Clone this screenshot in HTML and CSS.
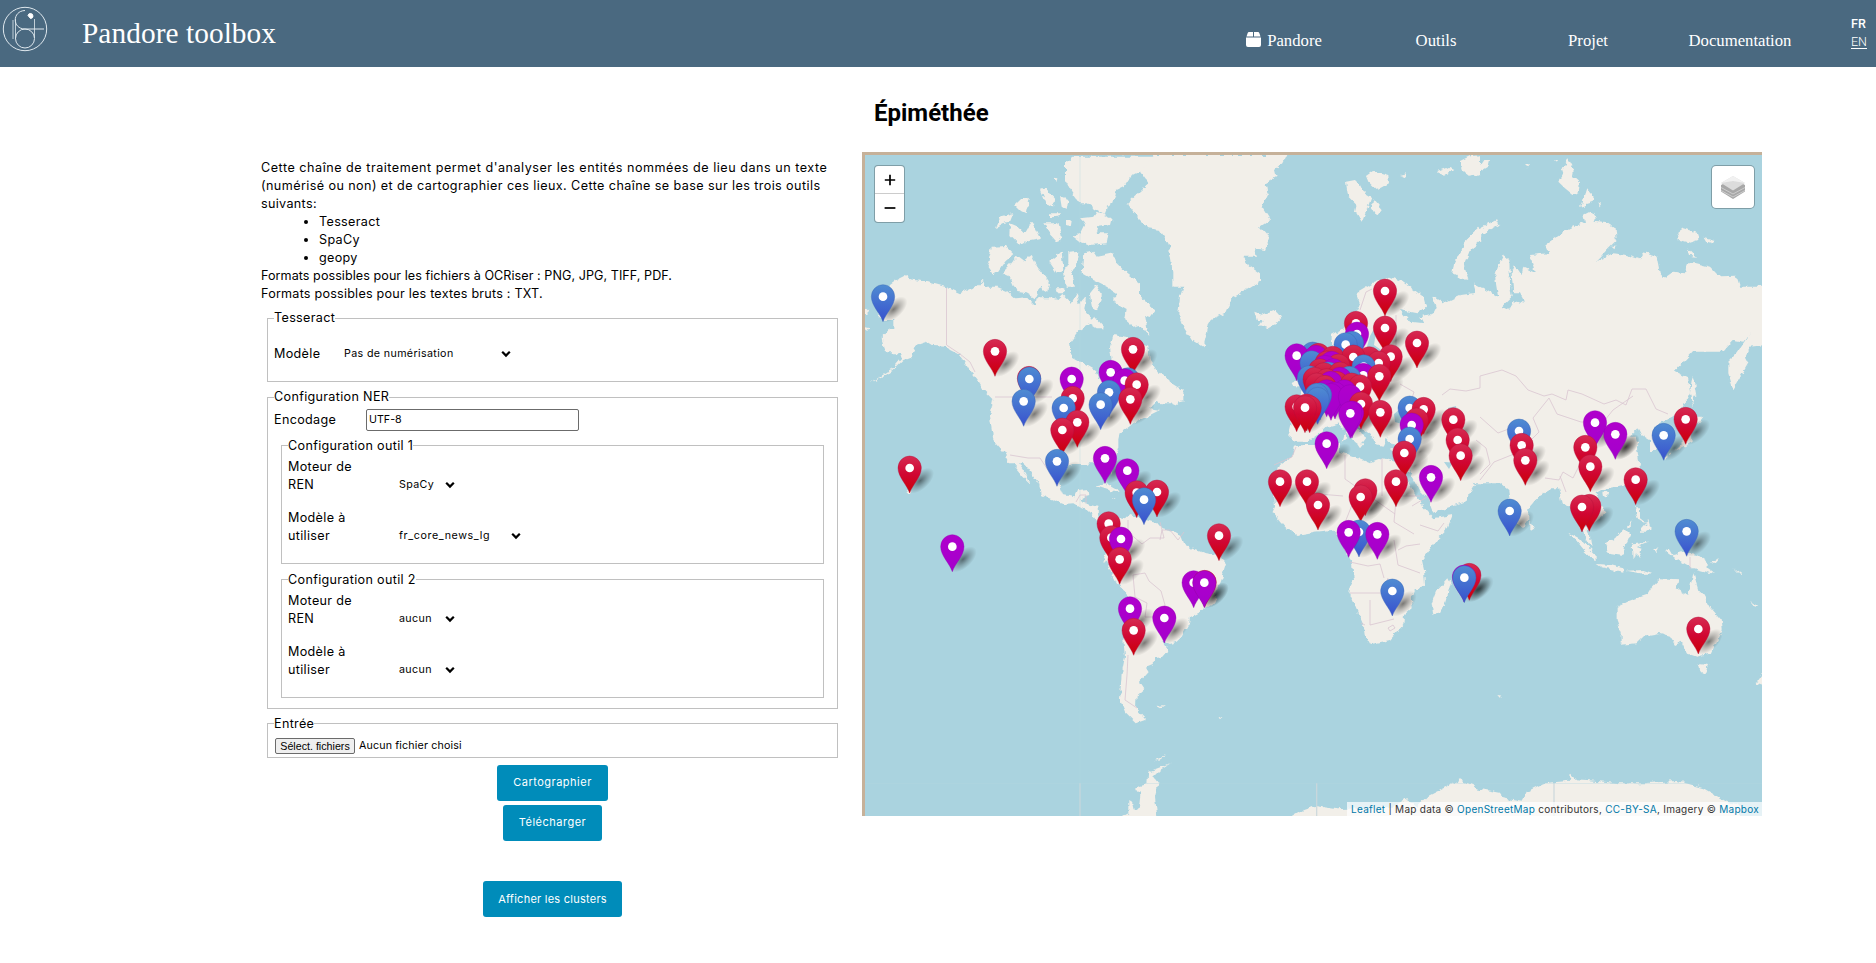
FILE: index.html
```html
<!DOCTYPE html>
<html lang="fr">
<head>
<meta charset="utf-8">
<title>Pandore toolbox</title>
<link rel="stylesheet" href="styles.css">
</head>
<body>
<header class="topbar">
  <svg class="logo" width="46" height="46" viewBox="0 0 46 46" fill="none" stroke="#dfe8ee" stroke-width="1">
    <circle cx="23" cy="23" r="21.7"/>
    <circle cx="23" cy="32.500" r="9.500"/>
    <path d="M23 4.500C10 5 10 23 23 23H42" /><path d="M13.500 13V33M11 14V33M32.500 13V32" stroke-opacity=".8"/>
    <path d="M26 9.500a2.500 2.500 0 1 1 2.500 3z" fill="#fff" stroke="#fff"/>
  </svg>
  <div class="brand">Pandore toolbox</div>
  <nav class="menu">
    <a class="menu-item"><svg class="box" width="15" height="15" viewBox="0 0 15 15" fill="#fff"><path d="M3 0h4v4.500H.5L1.700 1Q2 0 3 0zM8 0h4q1 0 1.300 1l1.200 3.500H8zM0 5.500h15V13q0 2-2 2H2q-2 0-2-2z"/></svg>Pandore</a>
    <a class="menu-item">Outils</a>
    <a class="menu-item">Projet</a>
    <a class="menu-item">Documentation</a>
  </nav>
  <div class="langs"><span class="lang-on">FR</span><span class="lang">EN</span></div>
</header>
<main class="page">
  <section class="side">
    <p class="intro"><span class="l1">Cette chaîne de traitement permet d'analyser les entités nommées de lieu dans un texte</span><br><span class="l2">(numérisé ou non) et de cartographier ces lieux. Cette chaîne se base sur les trois outils</span><br>suivants:</p>
    <ul class="tools"><li>Tesseract</li><li>SpaCy</li><li>geopy</li></ul>
    <p class="intro"><span class="l3">Formats possibles pour les fichiers à OCRiser : PNG, JPG, TIFF, PDF.</span><br><span class="l4">Formats possibles pour les textes bruts : TXT.</span></p>
    <fieldset class="group group-ocr">
      <legend>Tesseract</legend>
      <div class="row"><span class="row-label">Modèle</span><span class="select select-wide">Pas de numérisation<svg class="chev" width="10" height="8" viewBox="0 0 10 8"><path d="M1.200 1.700L5 5.600 8.800 1.700"/></svg></span></div>
    </fieldset>
    <fieldset class="group group-ner">
      <legend>Configuration NER</legend>
      <div class="enc"><span class="enc-label">Encodage</span><span class="input">UTF-8</span></div>
      <fieldset class="tool">
        <legend>Configuration outil 1</legend>
        <div class="opt"><span class="opt-label">Moteur de<br>REN</span><span class="select select-s">SpaCy<svg class="chev" width="10" height="8" viewBox="0 0 10 8"><path d="M1.200 1.700L5 5.600 8.800 1.700"/></svg></span></div>
        <div class="opt"><span class="opt-label">Modèle à<br>utiliser</span><span class="select select-m">fr_core_news_lg<svg class="chev" width="10" height="8" viewBox="0 0 10 8"><path d="M1.200 1.700L5 5.600 8.800 1.700"/></svg></span></div>
      </fieldset>
      <fieldset class="tool">
        <legend>Configuration outil 2</legend>
        <div class="opt"><span class="opt-label">Moteur de<br>REN</span><span class="select select-s">aucun<svg class="chev" width="10" height="8" viewBox="0 0 10 8"><path d="M1.200 1.700L5 5.600 8.800 1.700"/></svg></span></div>
        <div class="opt"><span class="opt-label">Modèle à<br>utiliser</span><span class="select select-s">aucun<svg class="chev" width="10" height="8" viewBox="0 0 10 8"><path d="M1.200 1.700L5 5.600 8.800 1.700"/></svg></span></div>
      </fieldset>
    </fieldset>
    <fieldset class="group group-in">
      <legend>Entrée</legend>
      <div class="file"><span class="file-btn">Sélect. fichiers</span><span class="file-txt">Aucun fichier choisi</span></div>
    </fieldset>
    <div class="actions">
      <span class="btn btn-carto">Cartographier</span>
      <span class="btn btn-dl">Télécharger</span>
      <span class="btn btn-cl">Afficher les clusters</span>
    </div>
  </section>
  <section class="main">
    <h1 class="title">Épiméthée</h1>
    <div class="map">
      <svg class="world" width="897" height="661" viewBox="865 155 897 661">
        <defs>
          <linearGradient id="gr" x1="0" y1="0" x2="0" y2="1"><stop offset="0" stop-color="#d62b52"/><stop offset=".5" stop-color="#d00632"/><stop offset="1" stop-color="#cb0005"/></linearGradient>
          <linearGradient id="gb" x1="0" y1="0" x2="0" y2="1"><stop offset="0" stop-color="#4f8cd2"/><stop offset="1" stop-color="#3850ce"/></linearGradient>
          <linearGradient id="gp" x1="0" y1="0" x2="0" y2="1"><stop offset="0" stop-color="#b000cc"/><stop offset="1" stop-color="#a400cc"/></linearGradient>
          <radialGradient id="gs"><stop offset="0" stop-color="#000" stop-opacity=".5"/><stop offset=".5" stop-color="#000" stop-opacity=".22"/><stop offset="1" stop-color="#000" stop-opacity="0"/></radialGradient>
          <filter id="coast" x="0" y="0" width="1" height="1"><feTurbulence type="fractalNoise" baseFrequency=".16" numOctaves="2" seed="4"/><feDisplacementMap in="SourceGraphic" scale="6" xChannelSelector="R" yChannelSelector="G"/></filter>
          <path id="pin" d="M0 75C-7 52-35 27-35 0A35 36 0 0 1 35 0C35 27 7 52 0 75z"/>
          <g id="sh"><ellipse cx="32" cy="38" rx="50" ry="26" transform="rotate(-42 32 38)" fill="url(#gs)"/></g>
          <use id="rx" href="#pin" fill="url(#gr)" stroke="#b3103a" stroke-opacity=".6" stroke-width="2"/>
          <use id="bx" href="#pin" fill="url(#gb)" stroke="#3a66b4" stroke-opacity=".6" stroke-width="2"/>
          <use id="px" href="#pin" fill="url(#gp)" stroke="#8f00b0" stroke-opacity=".6" stroke-width="2"/>
          <g id="r"><use href="#rx"/><circle r="13" fill="#fff"/></g>
          <g id="b"><use href="#bx"/><circle r="13" fill="#fff"/></g>
          <g id="p"><use href="#px"/><circle r="13" fill="#fff"/></g>
        </defs>
        <rect x="865" y="155" width="897" height="661" fill="#aad3df"/>
        <g fill="#f2efe9" filter="url(#coast)">
          <rect x="855" y="145" width="917" height="681" fill="none"/>
          <!-- North America and the Arctic islands -->
          <g transform="translate(850 80) scale(.33333)">
            <path d="M120 612L140 598 165 585 180 597 240 608 290 622 330 640 355 628 380 618 395 603 410 620 440 620 470 632 495 655 530 652 555 678 560 655 600 655 625 660 640 645 665 668 680 640 690 670 705 650 700 690 720 710 715 735 690 750 660 790 665 830 700 850 735 870 745 895 765 895 770 860 785 840 780 800 790 765 830 770 870 790 895 800 900 840 925 880 960 905 1000 930 1000 960 960 970 935 970 925 960 900 985 930 990 880 1015 850 1030 810 1060 800 1090 780 1150 480 1150 465 1120 430 1080 420 1010 430 960 400 930 385 905 365 880 345 845 330 825 300 810 290 800 250 798 230 785 200 795 185 830 160 840 130 870 100 890 60 910 90 890 130 865 155 835 150 820 110 820 100 800 95 770 110 755 130 745 130 720 100 720 80 700 100 660z"/>
            <path d="M425 500L465 498 490 522 465 545 445 575 430 585 412 560zM500 530L520 545 545 525 565 560 600 610 595 635 570 620 555 655 530 640 500 635 480 590 455 580 480 555zM670 230L910 230 880 270 840 290 820 320 800 330 790 365 770 380 765 405 740 390 710 370 690 370 665 335 645 300 645 250zM690 460L705 430 690 415 730 410 740 395 785 415 780 435 745 440 740 460 775 460 770 490 720 495 690 485 670 470zM700 520L730 515 740 530 790 520 800 550 830 580 870 610 870 650 915 690 900 710 885 705 895 765 870 735 850 740 825 720 830 690 795 670 800 640 770 620 730 600 695 580zM655 515L688 512 680 560 660 575 675 620 650 620 645 570 655 550zM598 545L635 515 640 570 620 578zM480 430L505 440 525 460 545 425 570 475 540 480 510 497 478 465zM435 445L450 410 490 400 480 425 460 430zM580 430L625 430 635 470 625 488 600 460zM495 375L520 350 540 355 530 400 510 390zM572 330L585 325 615 360 612 382 590 375zM630 350L655 360 650 390 635 380zM645 420L668 420 665 438 645 435zM600 400L630 400 625 410 600 412zM612 290L625 292 622 308zM720 640L740 615 755 640 755 660 740 690 725 680zM710 725L735 710 765 745 740 745zM790 655L808 655 805 672 790 670zM45 680L58 692 45 705zM45 742L65 746 45 750zM620 625L640 625 640 640 625 640z"/>
          </g>
          <!-- Greenland, Svalbard, Europe -->
          <g transform="translate(1160 140) scale(.33333)">
            <path d="M-20 45L382 45 370 70 345 90 350 110 320 130 325 160 305 200 330 240 300 260 330 295 315 330 285 325 290 350 250 350 265 375 300 400 300 425 260 450 215 475 195 520 160 535 145 560 130 622 95 600 70 560 55 520 60 470 70 440 40 440 40 400 25 310 0 270 -35 265 -75 225 -100 190 -35 130 -60 95z"/>
            <path d="M-40 720L0 695 30 720 20 750 45 765 52 798 20 785 0 790 -40 770zM283 515L310 525 350 510 367 530 350 550 325 565 300 555 310 540 290 540zM558 125L585 120 600 135 610 155 635 170 620 210 605 248 585 215 590 195 565 170zM618 108L640 92 685 105 687 130 650 150 625 125zM640 178L665 208 650 225 635 200zM720 105L740 100 735 112zM835 90L860 80 880 90 850 110zM900 70L925 50 960 45 960 105 930 110 905 90zM960 260L920 300 885 370 880 400 920 420 910 380 930 330 965 300z"/>
            <path d="M515 600L515 585 560 560 585 520 600 490 590 460 640 430 690 410 730 425 790 470 798 500 770 520 720 510 750 545 790 550 780 530 820 520 830 500 820 470 850 490 900 465 970 455 970 1030 880 1020 850 960 780 960 740 1000 720 960 740 930 700 915 680 890 670 920 650 915 640 890 600 860 575 830 600 870 615 895 600 915 570 890 540 850 500 860 480 880 440 905 405 905 385 890 395 850 385 790 420 770 430 740 400 738 395 730 420 720 430 690 480 680 520 640z"/>
            <path d="M540 840L552 870 540 860zM555 880L562 895 548 905zM590 910L612 910 600 925zM690 925L720 925 700 932z"/>
          </g>
          <!-- Asia -->
          <g transform="translate(1460 140) scale(.33333)">
            <path d="M-10 470L50 465 40 430 60 440 115 472 105 410 120 365 130 345 148 360 150 430 155 470 125 500 150 512 160 480 195 488 180 460 160 460 155 400 165 375 185 405 190 380 225 395 210 345 265 340 255 315 290 290 330 265 375 245 370 225 395 212 410 235 400 245 445 250 467 265 470 300 445 325 410 362 460 340 500 345 540 358 550 340 590 350 600 400 612 415 640 395 675 400 680 370 710 370 750 380 780 412 830 410 840 440 915 440 915 615 870 620 855 650 865 670 820 748 805 700 805 665 830 640 870 580 850 605 820 600 790 635 700 635 645 695 685 715 690 760 665 810 640 830 600 850 580 870 600 910 595 930 570 930 570 900 545 885 535 865 510 890 500 905 540 905 525 935 540 975 525 1030 -10 1030z"/>
            <path d="M697 705L705 730 712 770 700 770 697 800 690 760zM690 830L730 830 715 850 690 860zM610 955L640 935 675 900 690 865 695 905 660 925 625 940 620 960zM110 238L60 265 20 300 0 340 -10 410 25 420 12 380 20 330 70 280 118 255zM325 58L342 90 338 110 360 130 355 160 340 165 315 145 295 125 310 100 305 85zM378 145L405 175 395 190 360 200zM655 275L670 265 715 280 718 300 690 308 660 300zM728 290L765 300 755 310 735 302zM683 325L708 350 690 348zM0 60L30 45 35 70 50 90 70 60 90 60 85 80 60 95 30 105 0 80zM285 60l12 0-4 7zM195 75l12 0-5 7zM415 190l10 5-6 4zM455 320l12 0-4 8z"/>
          </g>
          <!-- Mexico, Central and South America -->
          <g transform="translate(860 440) scale(.33333)">
            <path d="M405 -10L415 10 445 40 465 80 490 110 510 130 495 100 470 60 485 60 520 105 542 140 545 165 580 180 610 192 640 190 665 205 690 215 712 245 745 250 750 235 730 245 715 230 712 200 670 190 660 180 685 165 683 147 655 150 645 172 610 165 595 130 600 95 640 75 680 75 700 65 740 68 755 105 760 70 775 20 775 -10zM705 137L735 130 780 155 760 155zM755 172l12 4-8 2zM140 150l12 12-8 0z"/>
            <path d="M735 245L770 230 795 235 808 222 840 235 890 250 905 268 940 275 965 290 975 318 1030 338 1075 345 1098 370 1085 410 1070 450 1065 490 1035 508 990 530 988 550 965 590 950 605 930 612 905 600 925 632 910 650 880 655 878 672 858 680 867 695 840 725 853 745 830 765 828 800 835 815 858 840 830 850 795 815 780 780 785 700 795 650 790 600 805 540 810 490 800 460 770 430 745 380 732 355 745 310 730 275zM888 798L915 795 900 805zM1075 828L1090 836 1085 840zM932 970L900 990 880 1010 895 1030 885 1070 893 1140 770 1140 805 1120 805 1080 820 1090 825 1110 840 1100 845 1055 825 1050 840 1035 862 1030 865 995zM885 960l30-12-20 14z"/>
          </g>
          <!-- Africa, South Asia, Oceania, Antarctica -->
          <g transform="translate(1260 440) scale(.33333)">
            <path d="M130 15L105 20 95 50 60 75 40 130 45 200 38 215 75 260 110 285 165 275 215 270 230 285 250 290 255 330 275 365 282 420 265 450 290 510 315 570 320 605 335 612 390 600 430 555 432 525 455 505 452 465 495 435 492 390 485 360 530 300 560 270 578 225 520 235 490 200 440 120 420 70 370 55 330 70 285 50 240 35 240 5 200 15zM565 415L572 430 555 490 540 520 520 527 515 490 528 455z"/>
            <path d="M420 -10L440 60 450 95 480 150 500 170 518 218 560 205 610 190 645 135 610 115 580 115 560 70 590 100 640 110 700 110 720 130 745 150 752 200 770 250 790 265 805 240 805 205 840 165 875 145 895 145 905 190 930 200 940 230 960 250 975 290 995 322 990 290 975 260 970 230 1000 250 1040 220 1020 190 1010 160 1030 148 1090 135 1130 110 1137 60 1130 20 1125 -10zM808 240L820 265 808 272zM1030 155l15 0-5 15-8-4z"/>
            <path d="M925 275L960 295 1010 345 1010 368 970 330zM1010 372L1050 375 1090 385 1090 395 1025 382zM1100 392L1150 390 1180 400 1150 402zM1035 310L1065 295 1090 265 1110 285 1095 320 1090 345 1045 338zM1115 310L1165 305 1130 318 1148 325 1135 335 1145 358 1125 340 1118 360zM1125 205L1140 205 1140 235 1160 250 1135 240zM1140 268L1165 240 1172 265 1160 275 1140 275zM1100 262L1122 235 1108 262zM1210 325L1230 328 1240 345 1270 335 1310 345 1340 365 1340 385 1365 402 1300 385 1255 360 1240 350zM1350 365L1380 355 1365 372zM1180 330l15-12-8 25zM1420 385l25 18-5 2zM1470 482L1492 498 1485 500z"/>
            <path d="M1070 500L1100 485 1130 475 1160 465 1175 440 1200 415 1255 418 1250 445 1285 467 1300 400 1315 450 1330 465 1350 500 1385 540 1388 570 1355 640 1310 650 1280 640 1265 605 1245 615 1230 590 1200 582 1150 590 1130 610 1085 614 1085 580 1070 540zM1316 672L1345 675 1335 702 1322 695zM1490 728L1510 700 1510 735zM715 765l15 2-8 6z"/>
            <path d="M80 1140L130 1110 165 1098 230 1108 400 1100 440 1075 470 1100 500 1070 550 1045 600 1018 625 1030 650 1045 720 1058 730 1075 785 1085 800 1055 850 1030 930 1022 932 1003 945 1018 980 1020 1080 1030 1150 1030 1250 1023 1330 1045 1400 1085 1440 1095 1440 1140z"/>
          </g>
        </g>
        <!-- Inland seas -->
        <g fill="#aad3df">
          <path d="M1380 318L1384 317 1376 332 1374 345 1384 352 1372 354 1360 368 1352 368 1366 350 1370 336zM1394 414L1406 404 1422 416 1420 424 1402 424 1395 422zM1448 408L1456 406 1458 422 1456 432 1449 424zM1462 463L1453 462 1449 469 1444 462z"/>
        </g>
        <!-- Country borders and tile seams -->
        <g fill="none" stroke="#d9c5d0" stroke-width=".8">
          <path d="M946.500 288V345L960 354 970 362 975 372M995 397H1052M1010 455L1028 458 1040 458 1048 470M1076 502l4-7 6 0 0 8M1128 520l0 12 14 12 8-6 14 0-4-16M1160 540l2-10 8 0 8 10 6-8M1133 575l12-2 4 8 12 10 4 14-2 12-18 0 2-14-12-6zM1128 655l-1 20-2 25 12 8"/>
          <path d="M1360 310l6-18 6-3M1396 315l0 35M1400 384l14 8-4 12M1442 395l8-6 16 2 14-3 0-12 22-6 14 6 12 14 16 6 8-2 14 6 2-10 14 4 22 10 12-4 10 5 6-16 14 0 10 20 12 5M1549 398l-16 20 6 14-18 18 4 24M1549 398l8 16 24 8 24-2 8-10 20-14M1480 417l18 16 16-6 14 12M1476 440l10 8 4 16-10 10"/>
          <path d="M1274 465l18-8 4-10M1345 455l0 24 50 35M1382 458l0 38M1390 496h30M1295 480l24 14 24 2M1352 505l-10 25 16 5M1396 500l-2 22 20 12M1350 562l18 4 12-2 4 14M1350 593h34l4-15M1370 600l0 25 24-6M1394 540l4 25 22 8M1398 550l8-4 14-2M1420 525l18 6 6-8M1365 625l-4-2M1388 628l5-3 2 3-5 3zM1412 506l20-12-4-12M1480 480l14-18 20-8 12-16M1545 478l14 2 4-8 10 6 8-16M1560 476l6 16M1690 557v12"/>
        </g>
        <path d="M1080 783V816M1316.700 783V816M1554 783V816" stroke="#ccd8dc" stroke-width="1.200"/>
        <path d="M865 783.500H1762M1080 155V816" stroke="#b3d4df" stroke-width=".5" opacity=".7"/>
        <!-- Markers -->
        <g transform="translate(850 80) scale(.33333)">
          <use href="#sh" x="99" y="650"/><use href="#sh" x="435" y="814"/><use href="#sh" x="849" y="808"/><use href="#sh" x="538" y="897"/><use href="#sh" x="860" y="914"/><use href="#sh" x="841" y="958"/><use href="#sh" x="521" y="964"/><use href="#sh" x="752" y="974"/><use href="#sh" x="682" y="1027"/><use href="#sh" x="637" y="1050"/>
          <use href="#b" x="99" y="650"/><use href="#r" x="849" y="808"/><use href="#r" x="435" y="814"/><use href="#p" x="782" y="877"/><use href="#r" x="537" y="895"/><use href="#b" x="538" y="897"/><use href="#p" x="665" y="897"/><use href="#b" x="834" y="899"/><use href="#p" x="824" y="902"/><use href="#r" x="860" y="914"/><use href="#b" x="777" y="937"/><use href="#r" x="668" y="955"/><use href="#r" x="841" y="958"/><use href="#b" x="521" y="964"/><use href="#b" x="752" y="974"/><use href="#b" x="641" y="984"/><use href="#r" x="682" y="1027"/><use href="#r" x="637" y="1050"/>
        </g>
        <g transform="translate(1160 140) scale(.33333)">
          <use href="#sh" x="675" y="453"/><use href="#sh" x="675" y="564"/><use href="#sh" x="771" y="609"/><use href="#sh" x="692" y="650"/><use href="#sh" x="658" y="709"/><use href="#sh" x="661" y="817"/><use href="#sh" x="603" y="792"/><use href="#sh" x="571" y="820"/><use href="#sh" x="435" y="803"/><use href="#sh" x="791" y="808"/><use href="#sh" x="770" y="840"/><use href="#sh" x="749" y="897"/><use href="#sh" x="733" y="939"/><use href="#sh" x="880" y="839"/><use href="#sh" x="893" y="900"/><use href="#sh" x="902" y="947"/><use href="#sh" x="500" y="911"/><use href="#sh" x="525" y="765"/>
          <use href="#r" x="675" y="453"/><use href="#r" x="588" y="550"/><use href="#r" x="675" y="564"/><use href="#p" x="591" y="582"/><use href="#r" x="771" y="609"/><use href="#bx" x="576" y="610"/><use href="#b" x="557" y="614"/><use href="#bx" x="458" y="642"/><use href="#p" x="410" y="647"/><use href="#rx" x="475" y="646"/><use href="#px" x="468" y="652"/><use href="#r" x="692" y="650"/><use href="#rx" x="518" y="655"/><use href="#rx" x="628" y="656"/><use href="#r" x="580" y="651"/><use href="#bx" x="455" y="668"/><use href="#r" x="656" y="669"/><use href="#rx" x="500" y="669"/><use href="#px" x="515" y="670"/><use href="#rx" x="535" y="678"/><use href="#px" x="495" y="682"/><use href="#b" x="611" y="680"/><use href="#rx" x="480" y="692"/><use href="#px" x="520" y="692"/><use href="#bx" x="505" y="702"/><use href="#rx" x="492" y="704"/><use href="#rx" x="540" y="702"/><use href="#p" x="610" y="706"/><use href="#r" x="658" y="709"/><use href="#bx" x="447" y="713"/><use href="#bx" x="568" y="715"/><use href="#px" x="540" y="718"/><use href="#rx" x="464" y="718"/><use href="#rx" x="500" y="722"/><use href="#rx" x="530" y="730"/><use href="#px" x="512" y="730"/><use href="#rx" x="575" y="735"/><use href="#r" x="600" y="740"/><use href="#rx" x="470" y="735"/><use href="#rx" x="495" y="742"/><use href="#px" x="553" y="755"/><use href="#px" x="500" y="755"/><use href="#p" x="525" y="762"/><use href="#px" x="513" y="766"/><use href="#bx" x="480" y="765"/><use href="#b" x="470" y="766"/><use href="#bx" x="473" y="778"/><use href="#px" x="570" y="770"/><use href="#r" x="603" y="792"/><use href="#r" x="410" y="800"/><use href="#rx" x="440" y="798"/><use href="#rx" x="449" y="803"/><use href="#r" x="435" y="803"/><use href="#b" x="749" y="804"/><use href="#r" x="791" y="808"/><use href="#r" x="661" y="817"/><use href="#px" x="576" y="819"/><use href="#p" x="571" y="820"/><use href="#r" x="880" y="839"/><use href="#rx" x="770" y="840"/><use href="#p" x="755" y="855"/><use href="#b" x="749" y="897"/><use href="#r" x="893" y="900"/><use href="#p" x="500" y="911"/><use href="#r" x="733" y="939"/><use href="#r" x="902" y="947"/>
        </g>
        <g transform="translate(1460 140) scale(.33333)">
          <use href="#sh" x="405" y="848"/><use href="#sh" x="466" y="883"/><use href="#sh" x="466" y="883"/><use href="#sh" x="185" y="916"/><use href="#sh" x="196" y="961"/><use href="#sh" x="391" y="980"/><use href="#sh" x="611" y="886"/><use href="#sh" x="677" y="838"/>
          <use href="#r" x="677" y="838"/><use href="#p" x="405" y="848"/><use href="#b" x="177" y="873"/><use href="#p" x="466" y="883"/><use href="#b" x="611" y="886"/><use href="#r" x="185" y="916"/><use href="#r" x="376" y="922"/><use href="#r" x="196" y="961"/><use href="#r" x="391" y="980"/>
        </g>
        <g transform="translate(860 440) scale(.33333)">
          <use href="#sh" x="149" y="84"/><use href="#sh" x="277" y="320"/><use href="#sh" x="591" y="64"/><use href="#sh" x="735" y="55"/><use href="#sh" x="802" y="92"/><use href="#sh" x="891" y="156"/><use href="#sh" x="783" y="297"/><use href="#sh" x="779" y="358"/><use href="#sh" x="1077" y="287"/><use href="#sh" x="1033" y="428"/><use href="#sh" x="1033" y="428"/><use href="#sh" x="810" y="506"/><use href="#sh" x="913" y="534"/><use href="#sh" x="821" y="571"/>
          <use href="#p" x="735" y="55"/><use href="#b" x="591" y="64"/><use href="#r" x="149" y="84"/><use href="#p" x="802" y="92"/><use href="#r" x="891" y="156"/><use href="#r" x="830" y="158"/><use href="#b" x="852" y="179"/><use href="#r" x="746" y="251"/><use href="#r" x="1077" y="287"/><use href="#r" x="754" y="293"/><use href="#p" x="783" y="297"/><use href="#p" x="277" y="320"/><use href="#r" x="779" y="358"/><use href="#p" x="1001" y="428"/><use href="#r" x="1034" y="427"/><use href="#p" x="1033" y="428"/><use href="#p" x="810" y="506"/><use href="#p" x="913" y="534"/><use href="#r" x="821" y="571"/>
        </g>
        <g transform="translate(1260 440) scale(.33333)">
          <use href="#sh" x="60" y="125"/><use href="#sh" x="141" y="125"/><use href="#sh" x="318" y="152"/><use href="#sh" x="302" y="171"/><use href="#sh" x="408" y="125"/><use href="#sh" x="513" y="112"/><use href="#sh" x="174" y="195"/><use href="#sh" x="297" y="277"/><use href="#sh" x="352" y="283"/><use href="#sh" x="749" y="213"/><use href="#sh" x="988" y="200"/><use href="#sh" x="1127" y="119"/><use href="#sh" x="1280" y="274"/><use href="#sh" x="397" y="453"/><use href="#sh" x="628" y="408"/><use href="#sh" x="620" y="411"/><use href="#sh" x="1315" y="567"/>
          <use href="#p" x="513" y="112"/><use href="#r" x="1127" y="119"/><use href="#r" x="60" y="125"/><use href="#r" x="141" y="125"/><use href="#r" x="408" y="125"/><use href="#rx" x="316" y="152"/><use href="#r" x="302" y="171"/><use href="#r" x="174" y="195"/><use href="#rx" x="988" y="199"/><use href="#r" x="966" y="201"/><use href="#b" x="749" y="213"/><use href="#b" x="1280" y="274"/><use href="#b" x="297" y="276"/><use href="#p" x="266" y="277"/><use href="#p" x="352" y="283"/><use href="#rx" x="628" y="406"/><use href="#px" x="612" y="411"/><use href="#b" x="613" y="413"/><use href="#b" x="397" y="453"/><use href="#r" x="1315" y="567"/>
        </g>
      </svg>
      <div class="zoom"><span class="zoom-btn"><svg width="12" height="12" viewBox="0 0 12 12"><path d="M6 .8v10.400M.8 6h10.400"/></svg></span><span class="zoom-btn"><svg width="12" height="12" viewBox="0 0 12 12"><path d="M.6 6h10.800"/></svg></span></div>
      <div class="layers"><svg width="24" height="24" viewBox="0 0 24 24"><path d="M0 16.500V10l12-6 12 6v6.500L12 24z" fill="#a8a8a8"/><path d="M0 12.500l12 6.500 12-6.500M0 15.500l12 6.500 12-6.500" fill="none" stroke="#cdcdcd" stroke-width="1"/><path d="M0 8l12-7 12 7-12 7.500z" fill="#dcdcdc"/><path d="M0 8l12-7 12 7-12-2z" fill="#f1f1f1"/></svg></div>
      <div class="credit"><span class="lk">Leaflet</span> | Map data © <span class="lk">OpenStreetMap</span> contributors, <span class="lk">CC-BY-SA</span>, Imagery © <span class="lk">Mapbox</span></div>
    </div>
  </section>
</main>
</body>
</html>
```
FILE: styles.css
```css
* { box-sizing: border-box; }
body { margin: 0; background: #fff; color: #000; font-family: Inter, "Open Sans", sans-serif; font-size: 12.6px; line-height: 18px; letter-spacing: .32px; width: 1876px; height: 963px; overflow: hidden; white-space: nowrap; }
.topbar { height: 67px; background: #4a6980; color: #fff; display: flex; align-items: flex-start; letter-spacing: 0; }
.logo { margin: 6px 0 0 2px; flex: none; }
.brand { margin: 16px 0 0 34px; width: 1126px; font: 29.300px/34px "Liberation Serif", serif; letter-spacing: .08px; }
.menu { display: flex; }
.menu-item { width: 152px; margin-top: 31px; text-align: center; font: 16.700px/20px "Liberation Serif", serif; }
.box { margin: 0 6px -1px 0; }
.langs { display: flex; flex-direction: column; margin: 15px 0 0 35px; font: 12.500px/18px Roboto, sans-serif; }
.lang-on { font-weight: 500; }
.lang { text-decoration: underline; text-underline-offset: 2px; font-weight: 300; }
.page { display: flex; align-items: flex-start; }
.side { width: 577px; margin: 92px 0 0 261px; }
.intro { margin: 0; }
.l1 { letter-spacing: .52px; }
.l2 { letter-spacing: .41px; }
.l3 { letter-spacing: .05px; }
.l4 { letter-spacing: .22px; }
.tools { margin: 0; padding-left: 58px; }
.group { margin: 0 0 0 6px; padding: 0 0 0 6px; border: 1px solid #c0c0c0; width: 571px; min-width: 0; }
legend { padding: 0; height: 18px; }
.group-ocr { height: 73px; margin-top: 6px; }
.group-ner { height: 321px; margin-top: 6px; }
.group-in { height: 44px; margin-top: 5px; }
.row { display: flex; align-items: center; margin-top: 18px; }
.row-label { width: 70px; }
.select { display: flex; align-items: center; justify-content: space-between; font-size: 10.700px; letter-spacing: .36px; }
.chev { fill: none; stroke: #000; stroke-width: 2.200; }
.select-wide { width: 167px; }
.select-s { width: 56px; }
.select-m { width: 122px; letter-spacing: .62px; }
.enc { display: flex; align-items: center; margin-top: 3px; height: 22px; }
.enc-label { width: 92px; }
.input { width: 213px; height: 22px; border: 1px solid #6b6b6b; border-radius: 2px; padding-left: 2px; font-size: 10.700px; line-height: 19px; letter-spacing: 0; }
.tool { margin: 5px 0 0 7px; padding: 0 0 0 6px; width: 543px; height: 128px; border: 1px solid #c0c0c0; min-width: 0; }
.tool legend { line-height: 20px; }
.tool + .tool { margin-top: 6px; }
.opt { display: flex; align-items: flex-end; height: 36px; margin: 4px 0 0; }
.opt + .opt { margin-top: 15px; }
.opt-label { width: 111px; }
.file { display: flex; align-items: center; margin-top: 6px; height: 16px; }
.group-in legend { line-height: 20px; }
.file-btn { width: 80px; height: 16px; margin-left: 1px; border: 1px solid #6b6b6b; border-radius: 2px; background: #efefef; text-align: center; font: 10.700px/14px "Liberation Sans", sans-serif; letter-spacing: 0; }
.file-txt { margin-left: 4px; font-size: 10.700px; letter-spacing: .14px; }
.actions { display: flex; flex-direction: column; align-items: center; margin: 7px 0 0 6px; width: 571px; }
.btn { height: 36px; border-radius: 3px; background: #008cba; color: #fff; text-align: center; font-size: 11px; line-height: 35px; letter-spacing: .5px; }
.btn-carto { width: 111px; }
.btn-dl { width: 99px; margin-top: 4px; }
.btn-cl { width: 139px; margin-top: 40px; line-height: 37px; letter-spacing: .25px; }
.main { margin-left: 24px; width: 900px; }
.title { margin: 30px 0 23px 12px; font: bold 24px/32px Roboto, sans-serif; letter-spacing: 0; }
.map { position: relative; width: 900px; height: 664px; border-top: 3px solid #c6b199; border-left: 3px solid #c6b199; }
.world { display: block; }
.zoom { position: absolute; left: 9px; top: 10px; width: 31px; height: 58px; border: 1.500px solid rgba(0,0,0,.25); border-radius: 4px; background: #fff; background-clip: padding-box; }
.zoom-btn { display: flex; align-items: center; justify-content: center; height: 27px; }
.zoom-btn + .zoom-btn { border-top: 1px solid #ccc; height: 28px; }
.zoom-btn path { stroke: #000; stroke-width: 1.700; fill: none; }
.layers { position: absolute; right: 7px; top: 10px; width: 44px; height: 44px; border: 1.500px solid rgba(0,0,0,.25); border-radius: 5px; background: #fff; background-clip: padding-box; display: flex; align-items: center; justify-content: center; }
.credit { position: absolute; right: 0; bottom: 0; width: 415px; height: 14px; padding-right: 3px; text-align: right; background: rgba(255,255,255,.7); color: #333; font-size: 10px; line-height: 15px; letter-spacing: .27px; }
.lk { color: #0078a8; }
```
